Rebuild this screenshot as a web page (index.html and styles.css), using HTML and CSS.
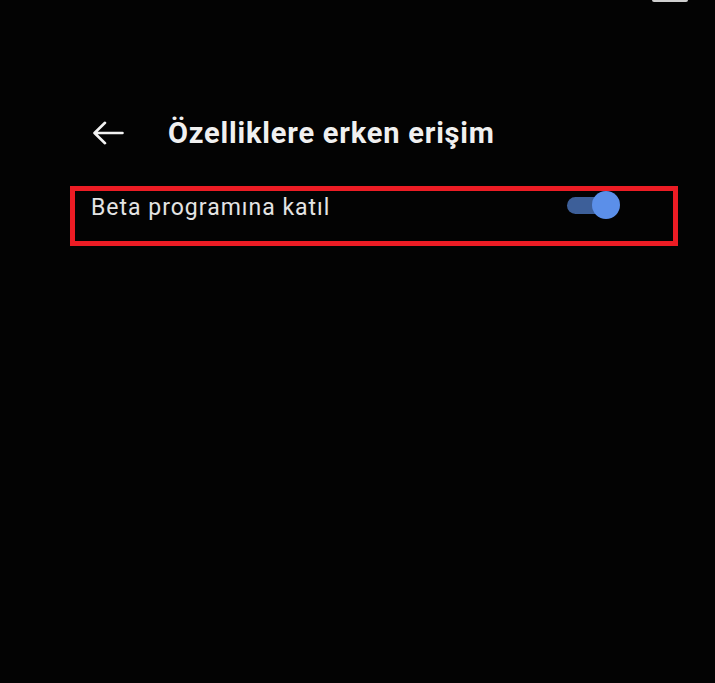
FILE: index.html
```html
<!DOCTYPE html>
<html lang="tr">
<head>
<meta charset="utf-8">
<link rel="stylesheet" href="styles.css">
</head>
<body>
<div class="screen">
  <div class="statusbar"><span class="battery"></span></div>
  <header class="appbar">
    <svg class="back" width="32" height="24" viewBox="0 0 32 24" aria-hidden="true">
      <path d="M30.5 12H3 M13 1.8L2.5 12L13 22.2" fill="none" stroke="#f2f2f2" stroke-width="2.6" stroke-linecap="round" stroke-linejoin="round"/>
    </svg>
    <h1 class="title">Özelliklere erken erişim</h1>
  </header>
  <div class="row highlight">
    <span class="label">Beta programına katıl</span>
    <span class="switch"><span class="track"></span><span class="thumb"></span></span>
  </div>
</div>
</body>
</html>
```
FILE: styles.css
```css
html, body {
  margin: 0;
  padding: 0;
  background: #000;
}
.screen {
  width: 715px;
  height: 683px;
  background: #030303;
  font-family: Roboto, "Noto Sans", sans-serif;
  display: flex;
  flex-direction: column;
}
.statusbar {
  height: 0;
  position: relative;
}
.battery {
  position: absolute;
  left: 652px;
  top: 0;
  width: 36px;
  height: 2px;
  background: #cfcfcf;
  border-radius: 0 0 2px 2px;
}
.appbar {
  display: flex;
  align-items: center;
  margin-top: 112px;
  padding-left: 92px;
  height: 42px;
}
.back {
  display: block;
  flex: none;
}
.title {
  margin: 0 0 0 44px;
  font-size: 29px;
  font-weight: 700;
  color: #f0f0f0;
  letter-spacing: 0.8px;
  line-height: 42px;
}
.row {
  margin: 32px 0 0 70px;
  width: 598px;
  height: 50px;
  border: 5px solid #ec1c24;
  display: flex;
  align-items: flex-start;
  box-sizing: content-box;
}
.label {
  margin: 3px 0 0 16px;
  font-size: 23px;
  color: #e4e4e4;
  line-height: 28px;
  letter-spacing: 1px;
}
.switch {
  position: relative;
  margin: 0 0 0 auto;
  margin-right: 53px;
  width: 53px;
  height: 27px;
  margin-top: 0;
}
.track {
  position: absolute;
  left: 0;
  top: 6px;
  width: 44px;
  height: 17px;
  border-radius: 9px;
  background: #3d5f99;
}
.thumb {
  position: absolute;
  left: 25px;
  top: 0;
  width: 28px;
  height: 28px;
  border-radius: 50%;
  background: #5b8fe9;
}
```
